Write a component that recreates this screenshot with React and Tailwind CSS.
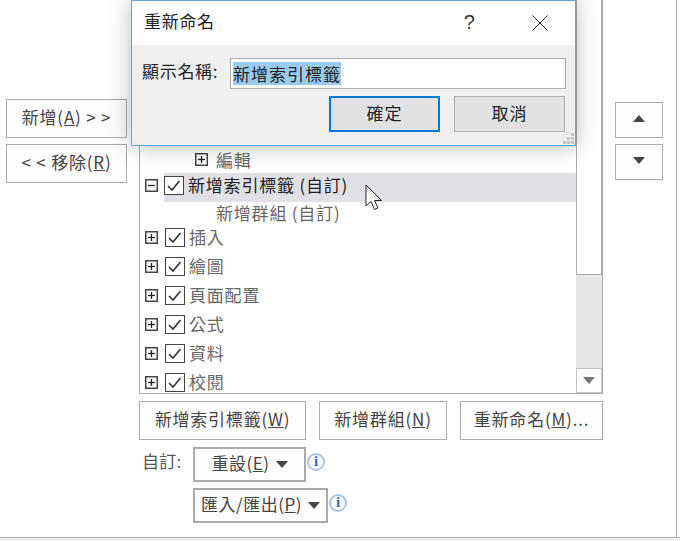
import React from 'react';

const CJK = 'font-["Noto_Sans_CJK_TC","Liberation_Sans",sans-serif]';

function Btn({ children, className = '' }) {
  return (
    <div className={`flex items-center justify-center border border-[#ababab] bg-[#fdfdfd] pb-[3px] text-[17px] tracking-[0.8px] text-[#444] ${className}`}>
      {children}
    </div>
  );
}

function Caret({ up = false, color = '#444', className = '' }) {
  return (
    <svg width="12" height="7" viewBox="0 0 12 7" className={`shrink-0 ${className}`}>
      <path d={up ? 'M6 0 L12 7 L0 7 Z' : 'M0 0 L12 0 L6 7 Z'} fill={color} />
    </svg>
  );
}

function Box({ minus = false, className = '' }) {
  return (
    <svg width="13" height="13" viewBox="0 0 13 13" className={`shrink-0 ${className}`}>
      <rect x="0.75" y="0.75" width="11.5" height="11.5" fill="#fff" stroke="#444" strokeWidth="1.5" />
      <path d="M3 6.5H10" stroke="#222" strokeWidth="1.3" />
      {!minus && <path d="M6.5 3V10" stroke="#222" strokeWidth="1.3" />}
    </svg>
  );
}

function Check() {
  return (
    <svg width="20" height="19" viewBox="0 0 20 19" className="shrink-0">
      <rect x="0.5" y="0.5" width="19" height="18" fill="#fff" stroke="#444" />
      <path d="M4 10 L8 14 L15.5 5" fill="none" stroke="#333" strokeWidth="1.6" />
    </svg>
  );
}

function Row({ label }) {
  return (
    <div className="flex h-[29px] items-center pl-[5px]">
      <Box />
      <div className="ml-[7px]"><Check /></div>
      <span className="ml-[4px] pb-[1px] text-[17px] tracking-[0.8px] text-[#666]">{label}</span>
    </div>
  );
}

function Info() {
  return (
    <div className="-mt-[6px] ml-px flex h-[18px] w-[18px] shrink-0 items-center justify-center rounded-full border-2 border-[#a9c3e6] bg-white font-['Liberation_Serif',serif] text-[15px] font-bold leading-none text-[#2f6fb5]">
      i
    </div>
  );
}

export default function App() {
  return (
    <div className={`relative flex h-[541px] w-[680px] flex-col overflow-hidden bg-white ${CJK}`}>
      <div className="flex h-[537px] w-[677px] border-r border-[#ababab]">
        {/* add / remove column */}
        <div className="flex w-[139px] shrink-0 flex-col gap-[6px] pl-[6px] pt-[99px]">
          <Btn className="h-[39px] w-[121px]">新增(<u>A</u>) &gt; &gt;</Btn>
          <Btn className="h-[39px] w-[121px]">&lt; &lt; 移除(<u>R</u>)</Btn>
        </div>

        {/* customize column */}
        <div className="w-[464px] shrink-0">
          <div className="flex h-[394px] border-x border-b border-[#ababab]">
            <div className="flex-1 overflow-hidden pt-[146px]">
              <div className="flex h-[27px] items-center pl-[55px]">
                <Box />
                <span className="ml-[8px] text-[17px] tracking-[0.8px] text-[#666]">編輯</span>
              </div>
              <div className="flex h-[29px] items-center pl-[5px]">
                <div className="pb-[4px]"><Box minus /></div>
                <div className="ml-[6px] flex h-full flex-1 items-center bg-[#e0e0e6] pb-[4px]">
                  <Check />
                  <span className="ml-[4px] pb-[2px] text-[17px] tracking-[0.8px] text-[#222]">新增索引標籤 (自訂)</span>
                </div>
              </div>
              <div className="flex h-[21px] items-center pl-[76px] text-[17px] tracking-[0.8px] text-[#666]">新增群組 (自訂)</div>
              <Row label="插入" />
              <Row label="繪圖" />
              <Row label="頁面配置" />
              <Row label="公式" />
              <Row label="資料" />
              <Row label="校閱" />
            </div>
            {/* scrollbar */}
            <div className="flex w-[26px] shrink-0 flex-col bg-[#e6e6e6]">
              <div className="h-[275px] border-x border-b border-[#ababab] bg-white" />
              <div className="flex-1" />
              <div className="flex h-[25px] items-center justify-center border border-[#c4c4c4] bg-white">
                <Caret color="#777" />
              </div>
            </div>
          </div>

          <div className="mt-[7px] flex justify-between">
            <Btn className="h-[39px] w-[167px]">新增索引標籤(<u>W</u>)</Btn>
            <Btn className="h-[39px] w-[128px]">新增群組(<u>N</u>)</Btn>
            <Btn className="h-[39px] w-[143px]">重新命名(<u>M</u>)...</Btn>
          </div>

          <div className="mt-[7px] flex h-[35px] items-center">
            <span className="w-[54px] pb-[7px] pl-[3px] text-[17px] tracking-[0.3px] text-[#555]">自訂:</span>
            <div className="flex h-[35px] w-[113px] items-center justify-center gap-[6px] border-2 border-[#ababab] bg-[#fdfdfd] pb-[3px] text-[17px] tracking-[0.5px] text-[#444]">
              <span>重設(<u>E</u>)</span><Caret className="mt-[3px]" />
            </div>
            <Info />
          </div>
          <div className="ml-[54px] mt-[6px] flex h-[35px] items-center">
            <div className="flex h-[35px] w-[135px] items-center justify-center gap-[6px] border-2 border-[#ababab] bg-[#fdfdfd] pb-[3px] text-[17px] tracking-[0.5px] text-[#444]">
              <span>匯入/匯出(<u>P</u>)</span><Caret className="mt-[3px]" />
            </div>
            <Info />
          </div>
        </div>

        {/* move up / down */}
        <div className="ml-[12px] flex w-[48px] flex-col gap-[6px] pt-[102px]">
          <Btn className="h-[36px] w-[48px] pb-0"><Caret up /></Btn>
          <Btn className="h-[36px] w-[48px] pb-0"><Caret /></Btn>
        </div>
      </div>
      <div className="flex-1 border-t border-[#ababab] bg-[#f0f0f0]" />

      {/* rename dialog */}
      <div className="absolute left-[131px] top-0 h-[146px] w-[445px] border border-[#5ea6e8] bg-[#efefef] shadow-[0_0_22px_rgba(0,0,0,0.28)]">
        <div className="flex h-[44px] items-center bg-white pl-[12px]">
          <span className="pb-[4px] text-[17px] tracking-[0.7px] text-[#222]">重新命名</span>
          <span className="ml-[249px] pb-[2px] font-['Liberation_Sans',sans-serif] text-[20px] text-[#333]">?</span>
          <svg width="16" height="16" viewBox="0 0 16 16" className="ml-[57px]">
            <path d="M0.5 0.5L15.5 15.5M15.5 0.5L0.5 15.5" stroke="#222" />
          </svg>
        </div>
        <div className="mt-[12px] flex h-[32px] items-center pl-[10px]">
          <span className="w-[88px] pb-[5px] text-[17px] tracking-[0.7px] text-[#222]">顯示名稱:</span>
          <div className="flex h-[31px] w-[336px] items-center border border-[#ababab] bg-white pl-[2px]">
            <span className="bg-[#9ccbf0] text-[17px] leading-[23px] tracking-[1px] text-[#222]">新增索引標籤</span>
          </div>
        </div>
        <div className="mt-[7px] flex gap-[14px] pl-[197px]">
          <div className="flex h-[36px] w-[111px] items-center justify-center border-2 border-[#0078d7] bg-[#e1e1e1] pb-[2px] text-[17px] tracking-[1px] text-[#222]">確定</div>
          <div className="flex h-[36px] w-[111px] items-center justify-center border border-[#adadad] bg-[#e1e1e1] pb-[2px] text-[17px] tracking-[1px] text-[#222]">取消</div>
        </div>
        <svg width="12" height="12" viewBox="0 0 12 12" className="absolute bottom-0 right-0">
          <path d="M8 0h3v3H8zM4 4h3v3H4zM8 4h3v3H8zM0 8h3v3H0zM4 8h3v3H4zM8 8h3v3H8z" fill="#c4c4c4" />
        </svg>
      </div>

      {/* mouse pointer */}
      <svg width="22" height="30" viewBox="0 0 22 30" className="absolute left-[365px] top-[184px]">
        <path d="M1 1 V22 L6 17.5 L9.5 25.5 L13 24 L9.5 16.5 L16.5 16.5 Z" fill="#fff" stroke="#222" strokeWidth="1" />
      </svg>
    </div>
  );
}
